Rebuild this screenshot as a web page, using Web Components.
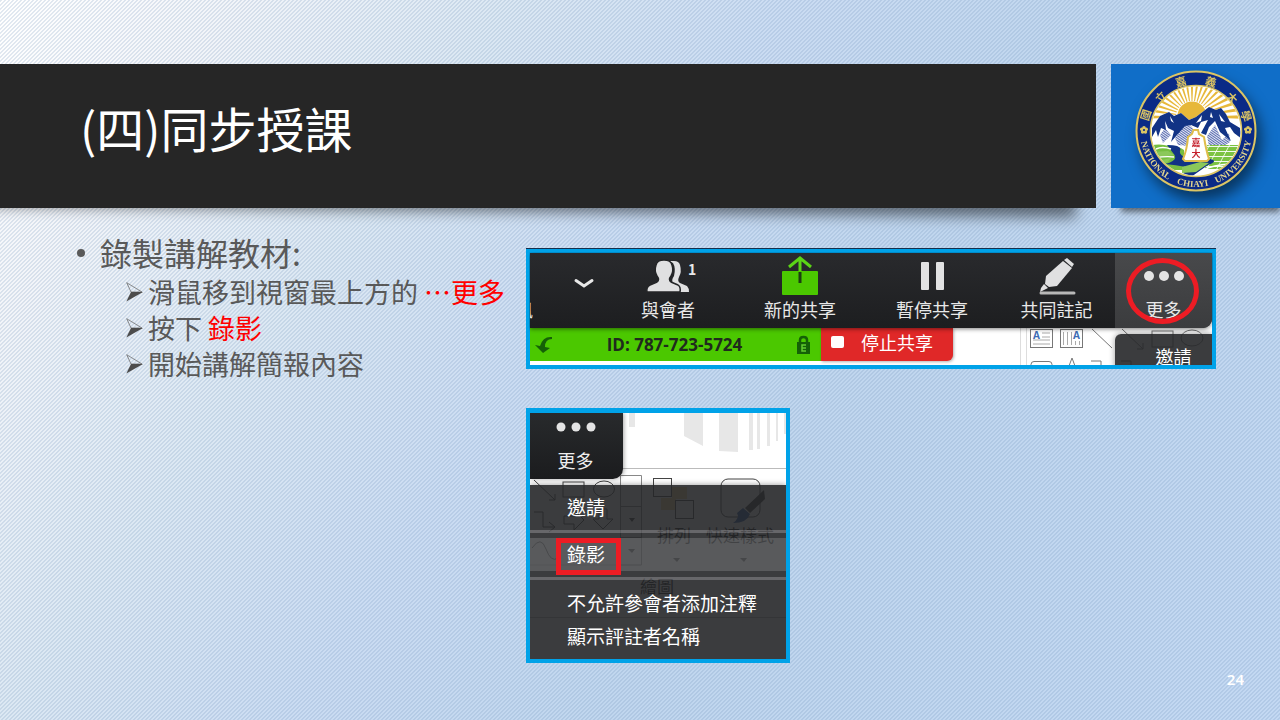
<!DOCTYPE html>
<html lang="zh-Hant">
<head>
<meta charset="utf-8">
<meta name="viewport" content="width=device-width, initial-scale=1">
<title>(四)同步授課</title>
<style>
  html, body { margin: 0; min-height: 100%; }
  body { font-family: "Noto Sans CJK TC", "Noto Sans", sans-serif; }
</style>
</head>
<body>
<lecture-slide page="24">
  <slide-header slot="header">
    <span slot="title">(四)同步授課</span>
    <university-seal slot="logo"></university-seal>
  </slide-header>
  <bullet-outline slot="text">
    <span slot="heading">錄製講解教材:</span>
    <arrow-item>滑鼠移到視窗最上方的 <red-mark>⋯更多</red-mark></arrow-item>
    <arrow-item>按下 <red-mark>錄影</red-mark></arrow-item>
    <arrow-item>開始講解簡報內容</arrow-item>
  </bullet-outline>
  <meeting-toolbar slot="media"></meeting-toolbar>
  <more-menu slot="media"></more-menu>
</lecture-slide>

<script>
const define = (name, html) => {
  const template = document.createElement('template');
  template.innerHTML = html;
  customElements.define(name, class extends HTMLElement {
    constructor() {
      super();
      this.attachShadow({ mode: 'open' }).append(template.content.cloneNode(true));
    }
    connectedCallback() {
      const page = this.shadowRoot.querySelector('[data-page]');
      if (page) page.textContent = this.getAttribute('page');
    }
  });
};

define('lecture-slide', `
  <style>
    :host {
      display: flex; flex-direction: column; min-height: 100vh; box-sizing: border-box;
      padding-top: 64px; color: #595959;
      background:
        linear-gradient(135deg, rgba(110,145,185,.2) 25%, transparent 25% 50%, rgba(110,145,185,.2) 50% 75%, transparent 75%) 0 0 / 4px 4px,
        linear-gradient(125deg, #ffffff 0%, #f3f5f9 12%, #dce8f3 28%, #cbdcf2 44%, #c0d6ee 62%, #c3d8f2 100%);
    }
    main { display: grid; grid-template-columns: 526fr 690fr; padding-right: 64px; }
    .text { padding-top: 24px; }
    .media { display: flex; flex-direction: column; align-items: flex-start; gap: 39px; padding-top: 41px; min-width: 0; }
    footer { margin-top: auto; padding: 0 36px 29px; text-align: right; font-family: "Noto Sans", sans-serif; font-size: 15px; line-height: 24px; font-weight: 600; color: #fff; }
  </style>
  <slot name="header"></slot>
  <main>
    <div class="text"><slot name="text"></slot></div>
    <div class="media"><slot name="media"></slot></div>
  </main>
  <footer data-page></footer>
`);

define('slide-header', `
  <style>
    :host { display: flex; gap: 15px; height: 144px; }
    .bar { position: relative; flex: 1096; display: flex; align-items: center; }
    .bar::before { content: ""; position: absolute; inset: 20px 20px 12px -20px; box-shadow: 0 10px 14px rgba(0,0,0,.5); transform: rotate(.6deg); transform-origin: 0 100%; }
    .bar::after { content: ""; position: absolute; inset: 0; background: #262626; }
    h1 { position: relative; z-index: 1; margin: 0; padding: 0 0 18px 80px; font-size: 48px; line-height: 60px; font-weight: 400; color: #fff; }
    .badge { position: relative; flex: 169; display: flex; align-items: center; justify-content: center; padding-bottom: 10px; box-sizing: border-box; }
    .badge::before { content: ""; position: absolute; inset: 20px 0 1px 10px; box-shadow: 0 5px 6px rgba(0,0,0,.5); }
    .badge::after { content: ""; position: absolute; inset: 0; background: #106ec8; }
    ::slotted(university-seal) { position: relative; z-index: 1; }
  </style>
  <header class="bar"><h1><slot name="title"></slot></h1></header>
  <div class="badge"><slot name="logo"></slot></div>
`);

const rays = Array.from({ length: 21 }, (_, i) => {
  const a = Math.PI * (i / 20);
  const p = (r, d) => `${(61 - r * Math.cos(a + d)).toFixed(1)},${(51 - r * Math.sin(a + d)).toFixed(1)}`;
  return `<polygon points="${p(16, -0.03)} ${p(52, -0.034)} ${p(52, 0.034)} ${p(16, 0.03)}"/>`;
}).join('');
const seals = [['國', 15, 49, -72], ['立', 30, 31, -46], ['嘉', 50, 16, -16], ['義', 80, 16, 16], ['大', 101, 32, 46], ['學', 115, 50, 72]]
  .map(([c, x, y, r]) => `<text transform="translate(${x} ${y}) rotate(${r})" y="4">${c}</text>`).join('');
const flower = '<circle r="1.8" cy="-2.3"/><circle r="1.8" cx="2.2" cy="-.7"/><circle r="1.8" cx="1.4" cy="1.9"/><circle r="1.8" cx="-1.4" cy="1.9"/><circle r="1.8" cx="-2.2" cy="-.7"/><circle r="1" fill="#0a2a86"/>';

define('university-seal', `
  <style>
    :host { display: block; width: 130px; height: 130px; }
    svg { display: block; overflow: visible; filter: drop-shadow(5px 9px 7px rgba(0,0,0,.5)); }
  </style>
  <svg width="130" height="130" viewBox="0 0 130 130" role="img" aria-label="國立嘉義大學">
    <defs>
      <path id="ring" d="M9 65A56 56 0 0 0 121 65"/>
      <clipPath id="disc"><circle cx="65" cy="65" r="44.5"/></clipPath>
      <pattern id="hatch" width="2" height="2" patternUnits="userSpaceOnUse" patternTransform="rotate(35)"><rect width="2" height="2" fill="#e4e8f4"/><rect width="2" height="1" fill="#5a6cb0"/></pattern>
      <pattern id="field" width="10" height="5" patternUnits="userSpaceOnUse" patternTransform="skewX(-28)"><rect width="10" height="5" fill="#7cc342"/><path d="M0 0H10M0 0V5" stroke="#fff" stroke-width="1.6"/></pattern>
    </defs>
    <circle cx="65" cy="65" r="59.5" fill="#0a2a86" stroke="#dcc564" stroke-width="2"/>
    <circle cx="65" cy="65" r="45.5" fill="#fff" stroke="#dcc564" stroke-width="1.6"/>
    <g clip-path="url(#disc)">
      <g fill="#e7b83a">${rays}<circle cx="61" cy="50" r="14.5"/></g>
      <path d="M18 63L30 49L38 46L43 50L50 47L58 54L65 51L78 41L85 44L90 42L99 56L110 63V85H18Z" fill="#fff"/>
      <path d="M44 72L52 60L57 56L63 64L58 80L47 79ZM76 70L84 59L91 74L98 67L99 76L90 82L78 80ZM29 69L34 62L40 69L32 77Z" fill="url(#hatch)"/>
      <path d="M21 62L29 50L38 46L43 50L50 47L58 54L65 51L78 41L85 44L90 42L95 48L99 56L109 62L111 73L103 67L99 61L94 62L100 75L89 66L84 55L78 61L75 69L70 67L77 54L70 56L67 62L60 59L54 60L46 69L40 76L43 65L37 62L34 55L35 64L30 62L27 71L25 64L21 71Z" fill="#123385"/>
      <path d="M65 57L71 49L70 55ZM80 46L82 52L79 51ZM39 50L43 57L40 55ZM88 48L94 56L90 55Z" fill="#fff"/>
      <path d="M18 80Q28 77 38 80Q48 80 53 84V104H23Z" fill="#76be40"/>
      <path d="M76 79H112V92L96 103H74Z" fill="url(#field)"/>
      <path d="M36 79Q52 79 49 85Q48 89 56 92Q67 95 79 93Q88 95 77 99L60 111H51L55 101Q45 99 34 98Q49 94 42 87Z" fill="#123385"/>
      <path d="M22 86L37 85L43 89L29 91ZM26 95L40 92L36 97ZM51 101L69 96L78 97L65 106L51 107Z" fill="#8bc85a"/>
      <path d="M25 83Q31 80 40 83M24 92Q34 90 43 91M72 104Q82 99 99 98" fill="none" stroke="#fff" stroke-width="1.4"/>
      <path d="M61 68L62.5 64H67L68 68L73 71Q75 84 78 93L76 95H54L52 93Q56 84 57 71Z" fill="#fff" stroke="#dfbd4b" stroke-width="2"/>
    </g>
    <g fill="#c5202c" font-family="'Noto Sans CJK TC',sans-serif" font-size="9" font-weight="700" text-anchor="middle"><text x="65" y="80">嘉</text><text x="65" y="91">大</text></g>
    <g fill="#dcc564" font-family="'Noto Sans CJK TC',sans-serif" font-size="11" font-weight="700" text-anchor="middle">${seals}</g>
    <g fill="#dcc564"><g transform="translate(13 64)">${flower}</g><g transform="translate(117 64)">${flower}</g></g>
    <g fill="#e4d68e" font-family="'Liberation Serif',serif" font-size="9" font-weight="700" text-anchor="middle">
      <text><textPath href="#ring" startOffset="20%">NATIONAL</textPath></text>
      <text><textPath href="#ring" startOffset="48%">CHIAYI</textPath></text>
      <text><textPath href="#ring" startOffset="78%">UNIVERSITY</textPath></text>
    </g>
  </svg>
`);

define('bullet-outline', `
  <style>
    :host { display: block; }
    .head { display: flex; align-items: center; padding-left: 77px; font-size: 32px; line-height: 42px; height: 42px; }
    .head::before { content: ""; width: 8px; height: 8px; margin-right: 15px; border-radius: 50%; background: #595959; }
    .head slot { display: block; line-height: 40px; padding-bottom: 2px; }
  </style>
  <div class="head"><slot name="heading"></slot></div>
  <div role="list"><slot></slot></div>
`);

define('arrow-item', `
  <style>
    :host { display: flex; align-items: center; gap: 5px; padding-left: 126px; font-size: 27px; line-height: 36px; white-space: nowrap; }
    svg { flex: none; }
  </style>
  <svg width="17" height="20" viewBox="0 0 17 20" aria-hidden="true"><path d="M.7.7L16 10H5Z" fill="none" stroke="#707070" stroke-width=".8"/><path d="M5 10H17L.3 19.6Z" fill="#4c4c4c"/></svg>
  <div role="listitem"><slot></slot></div>
`);

define('red-mark', `<style>:host { display: inline; color: #f00; }</style><slot></slot>`);

define('tool-button', `
  <style>
    :host { display: block; min-width: 0; }
    button { position: relative; display: flex; flex-direction: column; align-items: center; width: 100%; height: 75px; margin: 0; padding: 0; border: 0; background: none; font: inherit; font-size: 18px; line-height: 22px; color: #e8e8e8; white-space: nowrap; }
    .icon { display: flex; align-items: center; justify-content: center; height: 45px; }
  </style>
  <button type="button"><span class="icon"><slot name="icon"></slot></span><slot></slot></button>
`);

define('meeting-toolbar', `
  <style>
    :host { position: relative; display: block; box-sizing: border-box; width: 100%; border: 4px solid #00a2e8; box-shadow: 0 -1px #172f4c; background: #fff; overflow: clip; overflow-clip-margin: 1px; }
    svg { display: block; overflow: visible; }
    .tools { position: relative; z-index: 1; display: grid; grid-template-columns: 3fr 69fr 132fr 132fr 132fr 117fr 97fr; height: 75px; background: linear-gradient(#292a2d, #1d1e20); border-radius: 0 0 9px 0; overflow: hidden; box-shadow: 0 1px 4px rgba(0,0,0,.5); }
    .cut { display: flex; justify-content: flex-end; padding-top: 45px; overflow: hidden; font-size: 18px; line-height: 22px; color: #e8e8e8; }
    .fold { display: flex; align-items: center; justify-content: flex-end; padding: 0 8px 14px 0; border: 0; background: none; }
    .more { background: linear-gradient(#48494b, #3b3c3e); }
    sup { position: absolute; top: 6px; left: 50%; margin-left: 20px; font-size: 14px; line-height: 20px; font-weight: 700; }
    .status { display: grid; grid-template-columns: 291fr 132fr 259fr; height: 37px; }
    .id { display: flex; align-items: center; justify-content: space-between; height: 33px; padding: 0 10px 0 5px; background: #4bc800; color: #1f2a1d; font: 700 17px "Open Sans", "Noto Sans", sans-serif; }
    .id span { padding-right: 2px; white-space: nowrap; }
    .stop { display: flex; align-items: center; gap: 17px; height: 33px; padding: 0 0 5px 10px; border: 0; border-radius: 0 0 6px 0; background: #e02828; color: #fff; font: inherit; font-size: 18px; line-height: 22px; box-shadow: 1px 1px 3px rgba(0,0,0,.3); white-space: nowrap; }
    .stop i { width: 13px; height: 12px; border-radius: 2px; background: #fff; }
    .page { position: relative; overflow: hidden; }
    .page svg { position: absolute; top: 0; right: 0; }
    .menu { position: absolute; right: 0; top: 6px; width: 97px; height: 36px; padding: 8px 0 0 20px; box-sizing: border-box; border: 0; border-radius: 6px 0 0 0; background: rgba(38,39,41,.9); box-shadow: 0 0 6px rgba(0,0,0,.4); color: #fff; font: inherit; font-size: 18px; line-height: 22px; }
    .ring { position: absolute; z-index: 2; top: 5px; right: 13px; width: 73px; height: 66px; box-sizing: border-box; border: 5px solid #ed1c24; border-radius: 50%; }
  </style>
  <div class="tools">
    <div class="cut">訊</div>
    <button class="fold" type="button" aria-label="展開"><svg width="20" height="12" viewBox="0 0 20 12"><path d="M2 2.5L10 8L18 2.5" fill="none" stroke="#e8e8e8" stroke-width="3" stroke-linecap="round"/></svg></button>
    <tool-button>與會者
      <svg slot="icon" width="44" height="34" viewBox="0 0 44 34"><path d="M23 2H28Q33 2 34 6Q36 13 33 18Q31 22 34 24L41 27Q43 29 43 33H33V29L27 24Q25 21 28 17Q30 9 27 4Z" fill="#e0e0e1"/><path d="M1 33Q0 28 4 26L11 23Q14 21 11 17Q8 12 10 6Q11 1 18 1Q25 1 26 6Q28 12 25 17Q22 21 25 23L32 26Q35 28 34 33Z" fill="#e0e0e1" stroke="#242527" stroke-width="1.5"/></svg>
      <sup slot="icon">1</sup>
    </tool-button>
    <tool-button>新的共享
      <svg slot="icon" width="38" height="40" viewBox="0 0 38 40"><rect x="1" y="15" width="36" height="24" rx="1" fill="#4bc800"/><path d="M19 16V27" stroke="#1d3c12" stroke-width="3"/><path d="M19 15V3M8 11L19 2L30 11" fill="none" stroke="#5bd416" stroke-width="3"/></svg>
    </tool-button>
    <tool-button>暫停共享
      <svg slot="icon" width="23" height="28" viewBox="0 0 23 28"><g fill="#e2e2e3"><rect width="8" height="28" rx="1"/><rect x="15" width="8" height="28" rx="1"/></g></svg>
    </tool-button>
    <tool-button>共同註記
      <svg slot="icon" width="38" height="38" viewBox="0 0 38 38"><g fill="#e0e0e1"><path d="M26 3L29 1L36 7L34 10Z"/><path d="M25 4L34 11L19 29L11 30L7 27L8 19Z"/><path d="M6 27L10 31L4 34L2 35L3 31Z"/></g><path d="M3 36H36" stroke="#b8b8b8" stroke-width="3" stroke-linecap="round"/></svg>
    </tool-button>
    <tool-button class="more">更多
      <svg slot="icon" width="40" height="11" viewBox="0 0 40 11"><g fill="#e4e4e4"><circle cx="5" cy="6" r="5"/><circle cx="20" cy="6" r="5"/><circle cx="35" cy="6" r="5"/></g></svg>
    </tool-button>
  </div>
  <div class="status">
    <div class="id">
      <svg width="20" height="18" viewBox="0 0 20 18" aria-hidden="true"><path d="M17 1Q8 0 5 10L0 9L8 17L15 12L10 11Q10 3 17 3Z" fill="#156107"/></svg>
      <span>ID: 787-723-5724</span>
      <svg width="15" height="19" viewBox="0 0 15 19" aria-label="E"><path d="M4 8V5Q4 2 7.500 2Q11 2 11 5V8" fill="none" stroke="#156107" stroke-width="2.500"/><rect x="1" y="7" width="13" height="12" fill="#156107"/><path d="M10 10H6V16H10M6 13H10" fill="none" stroke="#62cc30" stroke-width="1.500"/></svg>
    </div>
    <button class="stop" type="button"><i></i>停止共享</button>
    <div class="page">
      <svg width="191" height="37" viewBox="1021 328 191 37" aria-hidden="true">
        <g fill="none" stroke="#777" stroke-width="1">
          <path d="M1020.500 328V365M1026.500 328V365" stroke="#ddd"/>
          <rect x="1030.500" y="329.500" width="22" height="18"/><path d="M1042 333H1050M1042 337H1050M1033 340H1050M1033 344H1050" stroke="#aaa"/>
          <rect x="1060.500" y="329.500" width="22" height="18"/><path d="M1063.500 332V345M1067.500 332V345M1071.500 332V345M1075.500 341V345M1079.500 341V345" stroke="#aaa"/>
          <path d="M1092 329L1112 348M1122 329L1143 349M1137 349H1143V343"/>
          <rect x="1152" y="331" width="21" height="16"/><ellipse cx="1192" cy="338" rx="11" ry="8"/>
          <rect x="1031" y="361.500" width="21" height="13" rx="3"/><path d="M1062 373L1069 366L1072 358L1075 366L1081 368M1091 361H1101V373M1121 361H1131V373"/>
        </g>
        <g fill="#3e6db5" font-family="Open Sans,sans-serif" font-weight="700" font-size="10"><text x="1033" y="339">A</text><text x="1073" y="339">A</text></g>
      </svg>
      <button class="menu" type="button">邀請</button>
    </div>
  </div>
  <div class="ring"></div>
`);

define('more-menu', `
  <style>
    :host { position: relative; display: block; box-sizing: border-box; width: 264px; max-width: 100%; border: 4px solid #00a2e8; border-top-width: 5px; background: #fff; overflow: hidden; }
    .scene { position: absolute; inset: 0; }
    .tab { position: relative; display: flex; flex-direction: column; align-items: center; gap: 15px; width: 93px; height: 66px; padding: 9px 2px 0 0; box-sizing: border-box; border: 0; border-radius: 0 0 10px 0; background: linear-gradient(#282a2c, #1b1c1e); box-shadow: 1px 0 4px rgba(0,0,0,.35); color: #eee; font: inherit; font-size: 18px; line-height: 26px; }
    .tab svg { flex: none; display: block; }
    menu { position: relative; margin: 6px 0 0; padding: 0; box-shadow: 0 0 6px rgba(0,0,0,.4); }
    menu button { display: flex; align-items: center; width: 100%; padding: 0 0 2px 37px; border: 0; background: rgba(38,39,41,.9); color: #fff; font: inherit; font-size: 19px; line-height: 24px; white-space: nowrap; }
    .invite { height: 45px; }
    .record { height: 33px; }
    menu .record { background: rgba(71,72,74,.9); }
    .rule { background: rgba(86,87,90,.9); height: 3px; }
    .dark { background: rgba(38,39,41,.9); height: 5px; }
    .dark.low { height: 6px; }
    .last { padding: 7px 0 6px; background: rgba(38,39,41,.9); }
    menu .last button { height: 33px; background: none; }
    .box { position: absolute; left: 26px; top: 53px; width: 65px; height: 37px; box-sizing: border-box; border: 5px solid #ed1c24; }
  </style>
  <svg class="scene" width="256" height="246" viewBox="530 413 256 246" aria-hidden="true">
    <g fill="#e7e7e7"><path d="M684 413H703V446L684 436ZM719 413H738V452L719 451ZM749 413H753V450H749ZM757 413H760V449H757ZM767 413H770V446H767ZM776 413H778V441H776ZM784 413H786V434H784ZM629 413H635V427H629Z"/></g>
    <path d="M623 468.500H786M530 617.500H786M530 565H641" stroke="#bbb" fill="none"/>
    <path d="M672 487H687V499H676V510H661V498H672Z" fill="#f0d890"/>
    <g fill="none" stroke="#444">
      <path d="M534 480L555 500M549 500H555V494M534 512H543V527H554M549 522L555 527L549 532M564 516H574V510L584 520L574 530V524H564ZM599 509H607V519H613L603 529L593 519H599ZM532 548Q541 535 546 549Q551 563 558 558"/>
      <rect x="563" y="482" width="21" height="15"/><ellipse cx="604" cy="489" rx="10.500" ry="8"/>
      <path d="M620.500 475.500H641.500V565H620.500ZM620 506.500H642M620 537.500H642" stroke="#888"/>
      <rect x="653.500" y="478.500" width="18" height="18"/><rect x="675.500" y="500.500" width="18" height="18"/><rect x="721" y="479" width="39" height="38" rx="7"/>
    </g>
    <path d="M764 490L745 508L750 513L765 499Z" fill="#333"/>
    <path d="M743 508L750 514Q747 523 733 523Q740 518 737 513Z" fill="#1f4fa0"/>
    <path d="M629 518H635L632 522ZM628 549H635L632 553ZM673 558H680L677 562ZM740 558H747L744 562Z" fill="#333"/>
    <g fill="#111" font-family="'Noto Sans CJK TC',sans-serif" font-size="17"><text x="657" y="542">排列</text><text x="706" y="542">快速樣式</text><text x="640" y="593">繪圖</text></g>
  </svg>
  <button class="tab" type="button"><svg width="40" height="10" viewBox="0 0 40 10" aria-hidden="true"><g fill="#e4e4e4"><circle cx="5" cy="5" r="4.500"/><circle cx="20" cy="5" r="4.500"/><circle cx="35" cy="5" r="4.500"/></g></svg><span>更多</span></button>
  <menu>
    <button class="invite" type="button">邀請</button>
    <div class="rule"></div><div class="dark"></div>
    <button class="record" type="button">錄影</button>
    <div class="dark low"></div><div class="rule"></div>
    <div class="last">
      <button type="button">不允許參會者添加注釋</button>
      <button type="button">顯示評註者名稱</button>
    </div>
    <div class="box"></div>
  </menu>
`);
</script>
</body>
</html>
